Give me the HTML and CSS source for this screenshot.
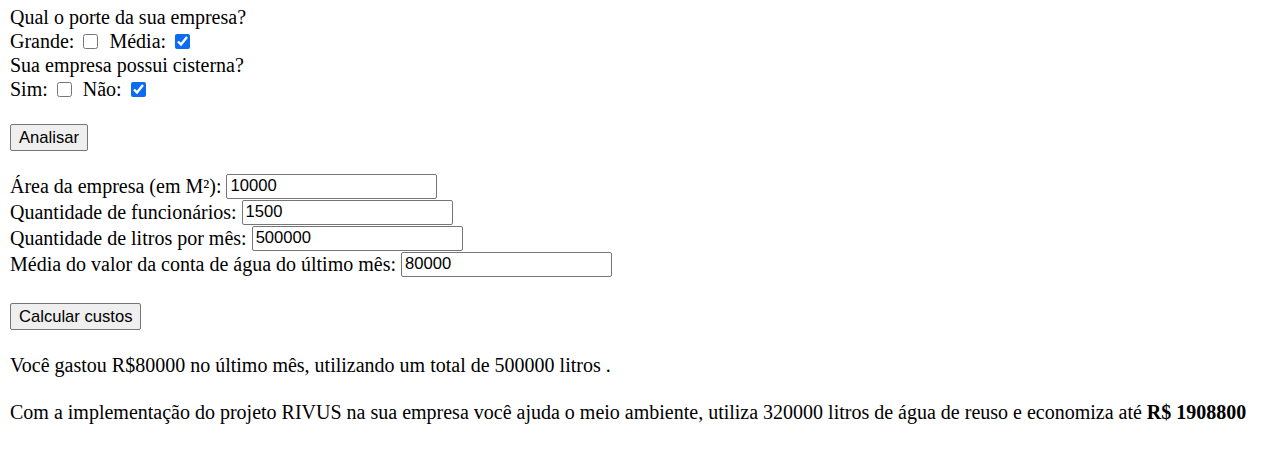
FILE: index.html
```html
<!DOCTYPE html>
<html lang="pt-BR">
<head>
  <meta charset="UTF-8">
  <meta name="viewport" content="width=device-width, initial-scale=1.0">
  <title>RIVUS - Calculadora</title>
  <link rel="stylesheet" href="styles.css">
</head>
<body>
  <div class="pergunta">Qual o porte da sua empresa?</div>
  <div class="opcoes">
    <label>Grande: <input type="checkbox" id="grande"></label>
    <label>Média: <input type="checkbox" id="media" checked></label>
  </div>
  <div class="pergunta">Sua empresa possui cisterna?</div>
  <div class="opcoes">
    <label>Sim: <input type="checkbox" id="sim"></label>
    <label>Não: <input type="checkbox" id="nao" checked></label>
  </div>

  <div class="acao">
    <button>Analisar</button>
  </div>

  <div class="campos">
    <div class="campo">Área da empresa (em M²):&nbsp;<input type="text" value="10000"></div>
    <div class="campo">Quantidade de funcionários:&nbsp;<input type="text" value="1500"></div>
    <div class="campo">Quantidade de litros por mês:&nbsp;<input type="text" value="500000"></div>
    <div class="campo">Média do valor da conta de água do último mês:&nbsp;<input type="text" value="80000"></div>
  </div>

  <div class="acao calcular">
    <button>Calcular custos</button>
  </div>

  <p class="resultado">Você gastou R$80000 no último mês, utilizando um total de 500000 litros .</p>
  <p class="resultado">Com a implementação do projeto RIVUS na sua empresa você ajuda o meio ambiente, utiliza 320000 litros de água de reuso e economiza até <b>R$ 1908800</b></p>
</body>
</html>
```

FILE: styles.css
```css
body {
  margin: 6px 10px 10px;
  font-family: 'Liberation Serif', 'Times New Roman', serif;
  font-size: 20px;
  color: #000;
  background: #fff;
}

.pergunta {
  height: 24px;
  line-height: 22px;
}

.opcoes {
  height: 24px;
  line-height: 22px;
}

.opcoes label {
  margin-right: 1px;
}

.opcoes input {
  width: 15px;
  height: 15px;
  margin: 0 5px 0 4px;
  vertical-align: -1px;
  accent-color: #0b6cf0;
}

/* Botoes */
.acao {
  margin: 22px 0;
  height: 27px;
}

.calcular {
  margin: 26px 0 0;
}

button {
  font-family: 'Liberation Sans', Arial, sans-serif;
  font-size: 16.6px;
  height: 27px;
  padding: 0 8px;
  background: #efefef;
  border: 1px solid #767676;
  border-radius: 2px;
  color: #000;
}

/* Campos */
.campo {
  display: flex;
  align-items: center;
  height: 26px;
}

.campo input {
  font-family: 'Liberation Sans', Arial, sans-serif;
  font-size: 16.6px;
  width: 211px;
  height: 25px;
  padding: 1px 3px;
  box-sizing: border-box;
  border: 1px solid #767676;
  border-radius: 2px;
}

.resultado {
  margin: 24px 0;
  line-height: 23px;
}
```
